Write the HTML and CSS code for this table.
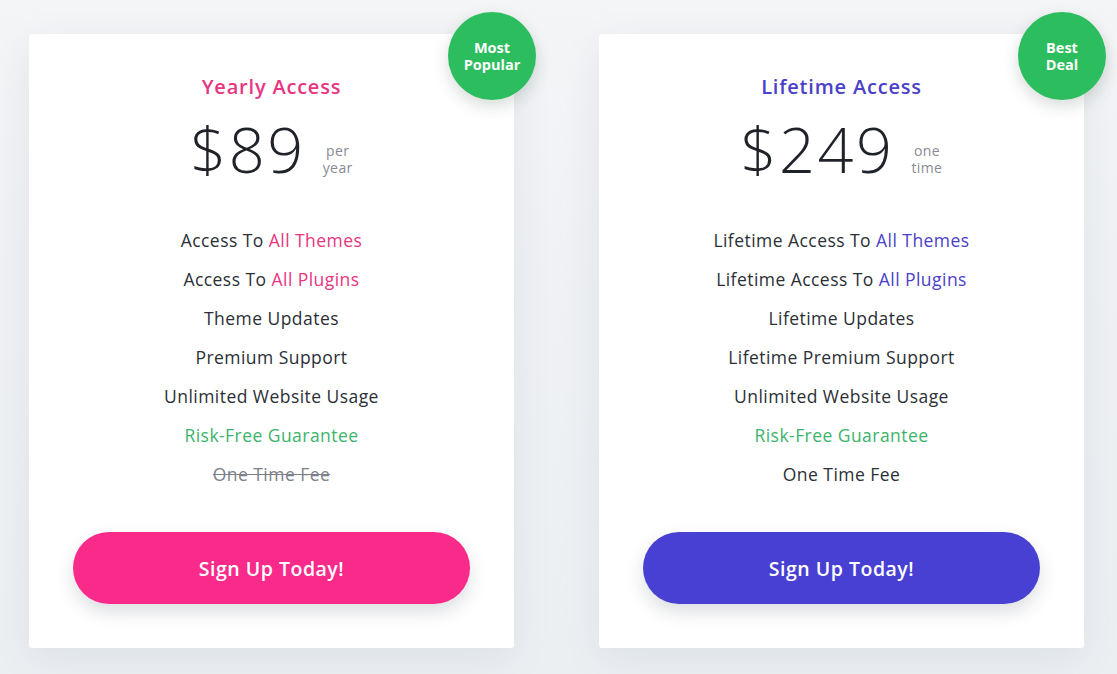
FILE: index.html
```html
<!DOCTYPE html>
<html>
<head>
<meta charset="utf-8">
<link rel="stylesheet" href="styles.css">
</head>
<body>
<div class="pricing">
  <div class="card card-pink">
    <div class="badge"><span>Most</span><span>Popular</span></div>
    <h2 class="title">Yearly Access</h2>
    <div class="price-row">
      <span class="amount">$89</span>
      <span class="period"><span>per</span><span>year</span></span>
    </div>
    <ul class="features">
      <li>Access To <span class="hl">All Themes</span></li>
      <li>Access To <span class="hl">All Plugins</span></li>
      <li>Theme Updates</li>
      <li>Premium Support</li>
      <li>Unlimited Website Usage</li>
      <li class="green">Risk-Free Guarantee</li>
      <li class="struck">One Time Fee</li>
    </ul>
    <a class="btn" href="#">Sign Up Today!</a>
  </div>
  <div class="card card-blue">
    <div class="badge"><span>Best</span><span>Deal</span></div>
    <h2 class="title">Lifetime Access</h2>
    <div class="price-row">
      <span class="amount">$249</span>
      <span class="period"><span>one</span><span>time</span></span>
    </div>
    <ul class="features">
      <li>Lifetime Access To <span class="hl">All Themes</span></li>
      <li>Lifetime Access To <span class="hl">All Plugins</span></li>
      <li>Lifetime Updates</li>
      <li>Lifetime Premium Support</li>
      <li>Unlimited Website Usage</li>
      <li class="green">Risk-Free Guarantee</li>
      <li>One Time Fee</li>
    </ul>
    <a class="btn" href="#">Sign Up Today!</a>
  </div>
</div>
</body>
</html>
```

FILE: styles.css
```css
html, body {
  margin: 0;
  padding: 0;
}
body {
  width: 1117px;
  height: 674px;
  overflow: hidden;
  font-family: "Open Sans", "Noto Sans", sans-serif;
  background: linear-gradient(180deg, #f4f5f7 0%, #eff1f4 40%, #eceff2 100%);
}
.pricing {
  display: flex;
  gap: 85px;
  padding: 34px 0 0 29px;
}
.card {
  position: relative;
  width: 485px;
  height: 614px;
  box-sizing: border-box;
  background: #fff;
  border-radius: 3px;
  box-shadow: 0 10px 40px rgba(40, 60, 90, 0.08);
  padding: 39px 44px 44px;
  display: flex;
  flex-direction: column;
  align-items: center;
  text-align: center;
}
.badge {
  position: absolute;
  top: -22px;
  right: -22px;
  width: 88px;
  height: 88px;
  border-radius: 50%;
  background: #2bbd5e;
  color: #fff;
  font-weight: 700;
  font-size: 14.5px;
  line-height: 17px;
  display: flex;
  flex-direction: column;
  align-items: center;
  justify-content: center;
  box-shadow: 0 6px 16px rgba(30, 60, 40, 0.18);
}
.badge span {
  display: block;
  height: 17px;
}
.title {
  margin: 0;
  font-size: 20px;
  line-height: 28px;
  font-weight: 600;
  letter-spacing: 0.8px;
}
.card-pink .title, .card-pink .hl { color: #e8357f; }
.card-blue .title, .card-blue .hl { color: #4a40c9; }
.price-row {
  margin-top: 13px;
  height: 70px;
  display: flex;
  align-items: center;
  gap: 17px;
}
.amount {
  font-size: 63px;
  font-weight: 300;
  color: #1f2329;
  line-height: 70px;
  letter-spacing: 2.5px;
}
.period {
  display: flex;
  flex-direction: column;
  align-items: center;
  font-size: 14px;
  line-height: 17px;
  letter-spacing: 0.4px;
  color: #878b93;
  margin-top: 20px;
}
.period span {
  display: block;
  height: 17px;
}
.features {
  list-style: none;
  margin: 37px 0 0;
  padding: 0;
}
.features li {
  font-size: 17.5px;
  line-height: 39px;
  letter-spacing: 0.45px;
  color: #2b2f36;
}
.features li.green { color: #3cb46b; }
.features li.struck {
  color: #7b8089;
  text-decoration: line-through;
}
.btn {
  margin-top: auto;
  width: 397px;
  height: 72px;
  border-radius: 36px;
  display: flex;
  align-items: center;
  justify-content: center;
  color: #fff;
  text-decoration: none;
  font-size: 19.5px;
  font-weight: 600;
  letter-spacing: 0.5px;
  box-shadow: 0 8px 18px rgba(40, 50, 70, 0.16);
}
.card-pink .btn { background: #fa2a8b; }
.card-blue .btn { background: #4840d2; }
```
